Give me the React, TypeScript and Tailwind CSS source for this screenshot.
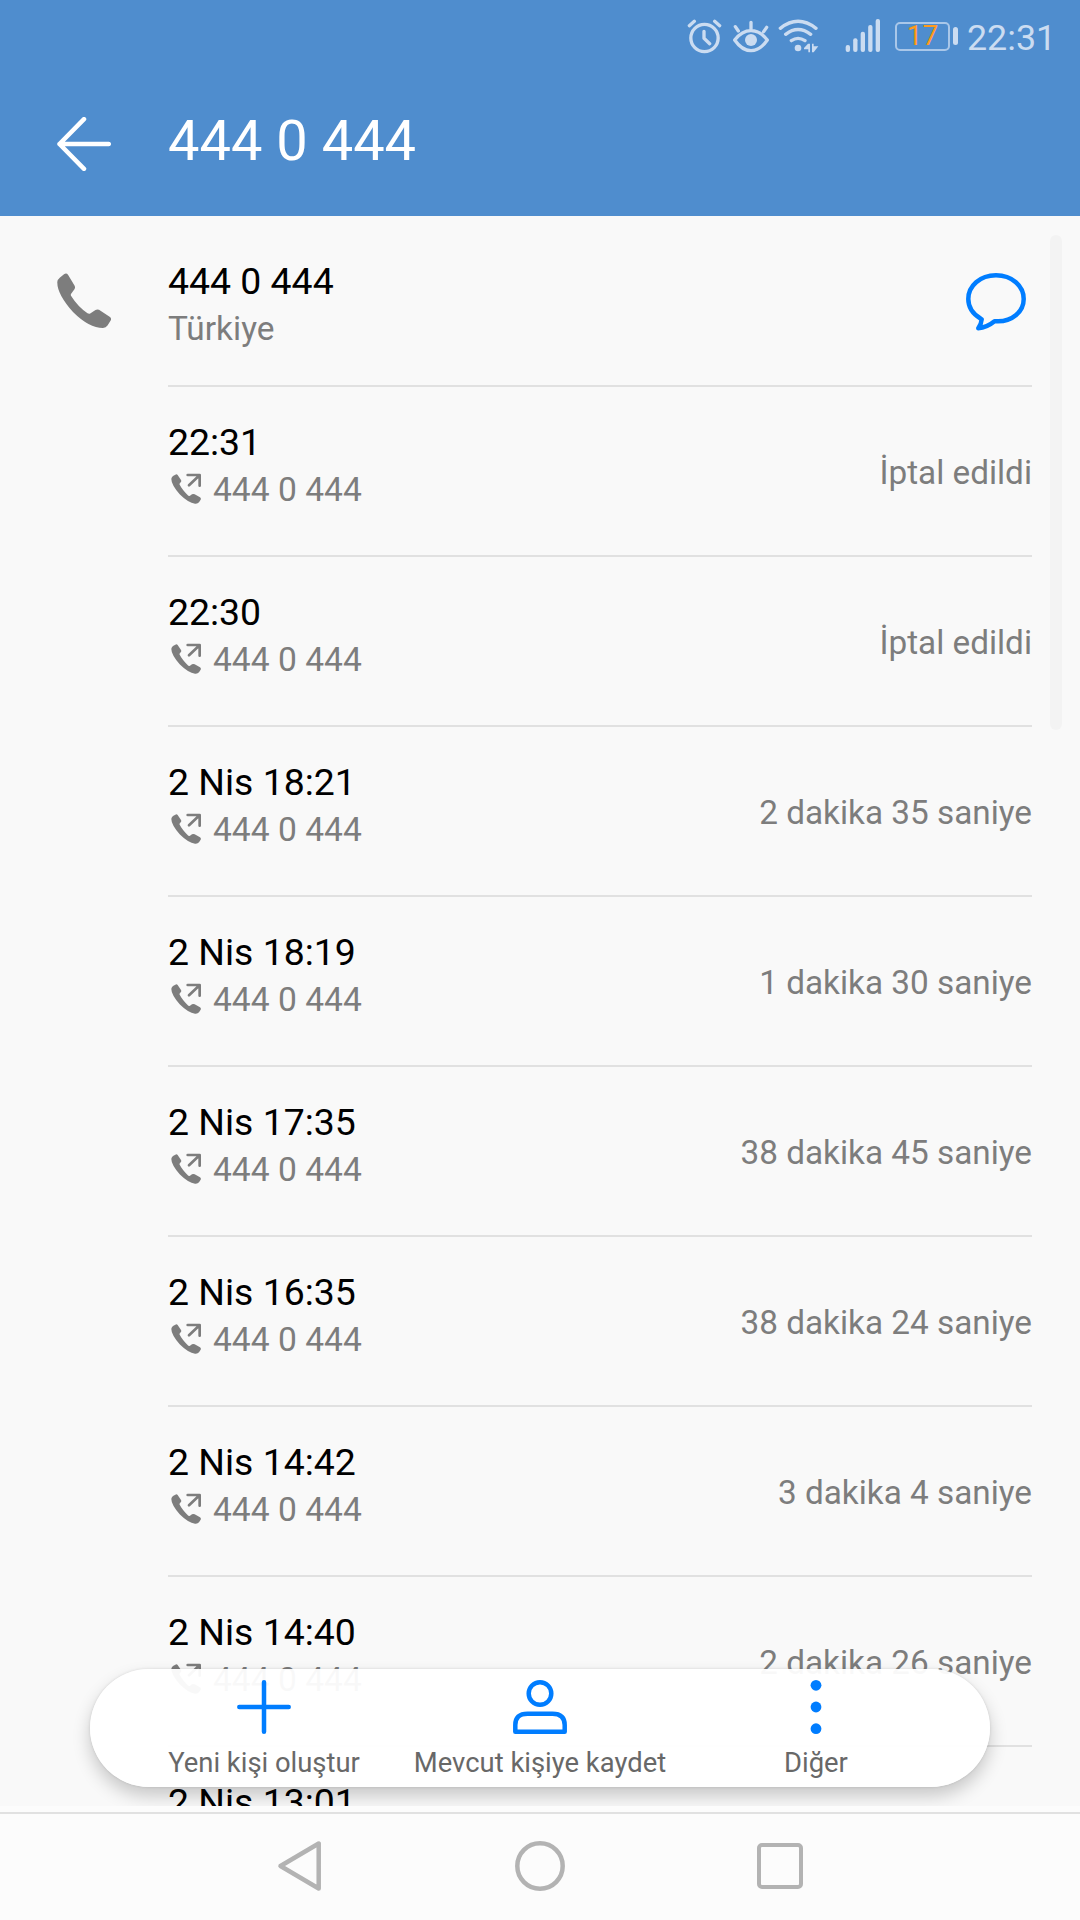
import type { ReactNode } from 'react';

interface Call {
  time: string;
  info: string;
}

const NUMBER = '444 0 444';

const calls: Call[] = [
  { time: '22:31', info: 'İptal edildi' },
  { time: '22:30', info: 'İptal edildi' },
  { time: '2 Nis 18:21', info: '2 dakika 35 saniye' },
  { time: '2 Nis 18:19', info: '1 dakika 30 saniye' },
  { time: '2 Nis 17:35', info: '38 dakika 45 saniye' },
  { time: '2 Nis 16:35', info: '38 dakika 24 saniye' },
  { time: '2 Nis 14:42', info: '3 dakika 4 saniye' },
  { time: '2 Nis 14:40', info: '2 dakika 26 saniye' },
];

const StatusBar = () => (
  <div className="flex h-[72px] items-center pl-[687px] text-[#cbdcf1]">
    {/* Alarm */}
    <svg className="h-10 w-[35px] shrink-0" viewBox="51 48 105 120" fill="none" stroke="currentColor" strokeWidth="10" strokeLinecap="round" strokeLinejoin="round">
      <circle cx="103.5" cy="114" r="41" />
      <path d="M102 94v21l17 16M58 77l15-13M134 64l15 13" />
    </svg>
    {/* Eye comfort */}
    <svg className="ml-2.5 h-10 w-[38px] shrink-0" viewBox="186 48 114 120" fill="none" stroke="currentColor" strokeWidth="10" strokeLinecap="round" strokeLinejoin="round">
      <path d="M194 120Q216 92 243 92T292 120Q270 152 243 152T194 120ZM243 67v20M196 80l9 13M290 82l-9 13" />
      <circle cx="243" cy="120" r="18" fill="currentColor" stroke="none" />
    </svg>
    {/* Wifi */}
    <svg className="ml-2 h-10 w-[41px] shrink-0" viewBox="324 48 123 120" fill="none" stroke="currentColor" strokeWidth="10" strokeLinecap="round">
      <path d="M331 85Q384 43 438 85M347 103Q384 74 422 103M364 122Q384 108 405 122" />
      <circle cx="384" cy="144" r="10" fill="currentColor" stroke="none" />
      <path d="M402 144L414 131H420V157H415V148H402ZM426 131H431V139H445L431 157H426Z" fill="currentColor" stroke="none" />
    </svg>
    {/* Signal */}
    <svg className="ml-[26px] h-10 w-9 shrink-0" viewBox="525 48 108 120" fill="currentColor">
      <rect x="527" y="135" width="13" height="21" rx="6" />
      <rect x="549.500" y="115" width="13" height="41" rx="6" />
      <rect x="572" y="95" width="13" height="61" rx="6" />
      <rect x="594.500" y="75" width="13" height="81" rx="6" />
      <rect x="617" y="57" width="13" height="99" rx="6" />
    </svg>
    {/* Battery */}
    <div className="ml-3.5 flex items-center gap-[3px]">
      <div className="flex h-[29px] w-[55px] items-center justify-center rounded-[5px] border-2 border-[#a9c7e9] text-[28px] leading-none text-[#ff9a1c]">
        17
      </div>
      <div className="h-[18px] w-[5px] rounded-full bg-current" />
    </div>
    <span className="ml-[9px] pt-[3px] text-[35.8px] leading-[42px]">22:31</span>
  </div>
);

const OutgoingIcon = () => (
  <svg className="mb-[3px] h-8 w-[30px]" viewBox="0 0 90 96" fill="#7d7d7d">
    <path d="M13 5Q17 2 20 6L30 21Q32 25 29 28L25 33Q33 50 52 68L56 69L63 64Q67 62 71 64L87 73Q91 76 89 80L84 88Q80 93 72 92Q52 90 26 64Q0 34 1 17Q2 12 6 9Z" />
    <path d="M50 6H86V38M84 8L54 37" fill="none" stroke="#7d7d7d" strokeWidth="8" strokeLinecap="round" strokeLinejoin="round" />
  </svg>
);

const CallRow = ({ time, info }: Call) => (
  <li className="flex h-[170px] shrink-0 justify-between border-b-2 border-[#e1e1e1]">
    <div className="pt-[31px]">
      <p className="text-[37.4px] leading-[48px] text-black">{time}</p>
      <div className="flex items-center pt-px pl-[2.5px] text-[33.6px] leading-[46px]">
        <OutgoingIcon />
        <span className="ml-[12.5px]">{NUMBER}</span>
      </div>
    </div>
    <p className="pt-[63px] text-[33.3px] leading-[46px]">{info}</p>
  </li>
);

const Action = ({ label, children }: { label: string; children: ReactNode }) => (
  <button className="flex flex-col items-center pt-[9px] text-[#686868]">
    <svg className="h-[58px] w-[58px]" viewBox="-29 -29 58 58" fill="none" stroke="#007dff" strokeWidth="4.500" strokeLinecap="round" strokeLinejoin="round">
      {children}
    </svg>
    <span className="mt-[9px] text-[27.4px] leading-9 whitespace-nowrap">{label}</span>
  </button>
);

const App = () => {
  return (
    <div className="relative flex h-[1920px] w-[1080px] flex-col overflow-hidden bg-[#fcfcfc] font-['Roboto',sans-serif] text-[#7d7d7d]">
      <header className="h-[216px] shrink-0 bg-[#4f8dce]">
        <StatusBar />
        <div className="flex h-36 items-center pl-[57px] text-white">
          <svg className="h-[54px] w-[54px]" viewBox="0 0 54 54" fill="none" stroke="currentColor" strokeWidth="4.500" strokeLinecap="round" strokeLinejoin="round">
            <path d="M27 2.200L2.500 27L27 51.800M2.500 27H51.800" />
          </svg>
          <h1 className="-mt-1.5 ml-[57px] text-[56px] leading-[66px]">{NUMBER}</h1>
        </div>
      </header>

      {/* Call history */}
      <main className="relative h-[1590px] shrink-0 overflow-hidden bg-[#f9f9f9]">
        <div className="flex">
          <div className="w-[168px] shrink-0 pt-[57px] pl-[57px]">
            <svg className="h-[55px] w-[54px]" viewBox="0 0 54 55" fill="#7d7d7d">
              <path d="M7 1.200Q9.500-.5 11 1.800L17.500 12.500Q18.500 14.300 17.600 16L14 21Q13.600 21.800 14 22.800Q21 34 30.500 40.200Q32 41 33.200 40.400L38.500 36.900Q40.300 36 42 36.800L53 44Q54.600 45.400 53.800 47.300L50.500 52.500Q49 54.800 46 55Q32 55 16 39Q0 21 .3 9Q.5 6.500 3 4.500Z" />
            </svg>
          </div>
          <div className="flex h-[171px] w-[864px] shrink-0 justify-between border-b-2 border-[#e1e1e1] pt-[41px]">
            <div>
              <p className="text-[37.4px] leading-[48px] text-black">{NUMBER}</p>
              <p className="pt-px text-[33.4px] leading-[46px]">Türkiye</p>
            </div>
            <svg className="mt-[14.5px] mr-1.5 h-[60px] w-[60px]" viewBox="0 0 60 60" fill="none" stroke="#007dff" strokeWidth="4.500" strokeLinecap="round" strokeLinejoin="round">
              <path d="M14.500 46.500C7 42 2.300 35 2.300 27C2.300 14 14 3.300 30 3.300S57.700 14 57.700 27S46 49.300 32 49.300H28.500C24 53 19 55.800 12.300 56.300C14.500 53 15.500 50 15.700 47.300Z" />
            </svg>
          </div>
        </div>
        <ul className="ml-[168px] flex w-[864px] flex-col">
          {calls.map((call) => (
            <CallRow key={call.time} {...call} />
          ))}
          <li className="pt-[31px] text-[37.4px] leading-[48px] text-black">2 Nis 13:01</li>
        </ul>
        <div className="absolute top-[19px] left-[1050px] h-[495px] w-3 rounded-full bg-[#f3f3f3]" />

        {/* Floating actions */}
        <div className="absolute top-[1453px] left-[90px] grid h-[118px] w-[900px] grid-cols-3 rounded-full bg-white/95 px-9 shadow-[0_9px_18px_rgba(0,0,0,0.2),0_0_3px_rgba(0,0,0,0.12)]">
          <Action label="Yeni kişi oluştur">
            <path d="M0-24.700V24.700M-24.700 0H24.700" />
          </Action>
          <Action label="Mevcut kişiye kaydet">
            <circle cx="0" cy="-13.500" r="11.300" />
            <path d="M-24.700 24.700V18Q-24.700 6.700-12.500 6.700H12.500Q24.700 6.700 24.700 18V24.700Z" />
          </Action>
          <Action label="Diğer">
            <g fill="#007dff" stroke="none">
              <circle cx="0" cy="-21.700" r="5.400" />
              <circle cx="0" cy="0" r="5.400" />
              <circle cx="0" cy="21.700" r="5.400" />
            </g>
          </Action>
        </div>
      </main>

      {/* System navigation */}
      <nav className="mt-1.5 flex h-[108px] items-center border-t-2 border-[#e1e1e1] pb-0.5 pl-[276px]">
        <svg className="h-[54px] w-12" viewBox="0 0 48 54" fill="none" stroke="#b3b3b3" strokeWidth="4.500" strokeLinejoin="round">
          <path d="M42.700 4.500V49.500L4.500 27Z" />
        </svg>
        <svg className="ml-[189px] h-[54px] w-[54px]" viewBox="0 0 54 54" fill="none" stroke="#b3b3b3" strokeWidth="4.500">
          <circle cx="27" cy="27" r="22.700" />
        </svg>
        <div className="ml-[190px] h-[46px] w-[46px] rounded-[5px] border-[4.5px] border-[#b3b3b3]" />
      </nav>
    </div>
  );
};

export default App;
